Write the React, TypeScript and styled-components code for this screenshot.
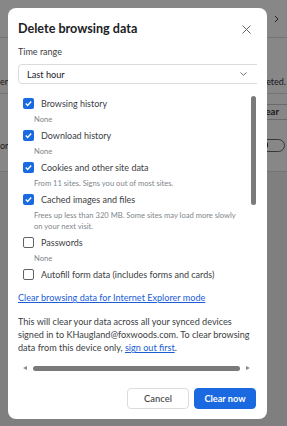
import React from "react";
import styled, { createGlobalStyle } from "styled-components";

const GlobalStyle = createGlobalStyle`
  html, body { margin: 0; padding: 0; }
  body {
    font-family: Lato, "Noto Sans", sans-serif;
    background: #f0f0f0;
    -webkit-font-smoothing: antialiased;
  }
`;

const Page = styled.div`
  position: relative;
  width: 287px;
  height: 426px;
  overflow: hidden;
  background: #f0f0f0;
`;

/* settings page behind the dialog */
const Card = styled.div`
  display: flex;
  flex-direction: column;
  background: #fff;
  color: #333;
  font-size: 9px;
`;

const CardRow = styled.div<{ $h: number }>`
  height: ${(p) => p.$h}px;
  border-bottom: 1px solid #dcdcdc;
  display: flex;
  flex-direction: column;
  justify-content: space-between;
`;

const Line = styled.div<{ $h: number }>`
  height: ${(p) => p.$h}px;
  display: flex;
  align-items: center;
  justify-content: space-between;
  white-space: nowrap;
  padding-right: 1px;
`;

const GhostButton = styled.div`
  height: 14px;
  padding: 0 8px 0 10px;
  border: 1px solid #c8c8c8;
  border-right: none;
  border-radius: 4px 0 0 4px;
  font-weight: 700;
  font-size: 9.5px;
  line-height: 14px;
  margin-right: -1px;
`;

const Toggle = styled.div`
  width: 22px;
  height: 11px;
  border: 1px solid #6a6a6a;
  border-radius: 7px;
  display: flex;
  align-items: center;
  padding: 0 2px;
  margin-right: 1px;
  &::before {
    content: "";
    width: 8px;
    height: 8px;
    border-radius: 50%;
    background: #222;
  }
`;

const Overlay = styled.div`
  position: absolute;
  inset: 0;
  background: rgba(0, 0, 0, 0.47);
`;

const Dialog = styled.div`
  position: absolute;
  left: 8px;
  top: 8px;
  width: 259px;
  height: 411px;
  box-sizing: border-box;
  background: #fff;
  border-radius: 8px;
  padding: 0 10px 10px;
  display: flex;
  flex-direction: column;
  color: #3c4043;
`;

const Header = styled.div`
  height: 29px;
  padding-top: 12px;
  box-sizing: border-box;
  display: flex;
  justify-content: space-between;
  align-items: flex-start;
`;

const Title = styled.h1`
  margin: 0;
  font-size: 12.6px;
  line-height: 17px;
  font-weight: 700;
  color: #202124;
`;

const CloseButton = styled.button`
  width: 16px;
  height: 16px;
  margin: 1px 3px 0 0;
  padding: 0;
  border: none;
  background: none;
  display: flex;
  align-items: center;
  justify-content: center;
  color: #5f6368;
`;

const Body = styled.div`
  display: flex;
  flex-direction: column;
  overflow: hidden;
`;

const FieldLabel = styled.div`
  margin-top: 9px;
  font-size: 9px;
  line-height: 12px;
  color: #3c4043;
`;

const SelectBox = styled.div`
  margin-top: 6px;
  width: 244px;
  height: 20px;
  flex-shrink: 0;
  box-sizing: border-box;
  border: 1px solid #dadce0;
  border-radius: 4px;
  padding: 0 14px 0 8px;
  display: flex;
  align-items: center;
  justify-content: space-between;
  font-size: 9.2px;
  color: #202124;
`;

const ScrollArea = styled.div`
  margin-top: 8px;
  height: 282px;
  flex-shrink: 0;
  display: grid;
  grid-template-columns: 1fr 6px;
  grid-template-rows: 270px 12px;
`;

const ScrollContent = styled.div`
  overflow: hidden;
  padding-top: 3px;
  white-space: nowrap;
`;

const VTrack = styled.div`
  display: flex;
  flex-direction: column;
  padding-top: 4px;
`;

const VThumb = styled.div`
  width: 5px;
  height: 109px;
  border-radius: 3px;
  background: #7a7a7a;
`;

const HTrack = styled.div`
  display: flex;
  align-items: center;
  gap: 6px;
  padding: 0 1px 0 5px;
`;

const HThumb = styled.div`
  flex: 1;
  height: 5px;
  border-radius: 3px;
  background: #7a7a7a;
`;

const Arrow = styled.div<{ $dir: "left" | "right" }>`
  width: 0;
  height: 0;
  border-top: 2.5px solid transparent;
  border-bottom: 2.5px solid transparent;
  ${(p) =>
    p.$dir === "left"
      ? "border-right: 4px solid #8a8a8a;"
      : "border-left: 4px solid #8a8a8a;"}
`;

const Item = styled.div``;

const ItemRow = styled.label`
  height: 16px;
  display: flex;
  align-items: center;
  gap: 7px;
  padding-left: 5px;
  font-size: 9px;
  color: #3c4043;
`;

const Box = styled.span<{ $checked: boolean }>`
  width: 11px;
  height: 11px;
  box-sizing: border-box;
  border-radius: 2px;
  flex-shrink: 0;
  display: flex;
  align-items: center;
  justify-content: center;
  background: ${(p) => (p.$checked ? "#1a69e0" : "#fff")};
  border: ${(p) => (p.$checked ? "none" : "1.5px solid #5f6368")};
`;

const Sub = styled.div`
  padding: 3px 0 2px 16px;
  font-size: 7.6px;
  line-height: 11px;
  color: #80868b;
`;

const IeLink = styled.a`
  display: block;
  margin-top: 10px;
  font-size: 9.1px;
  line-height: 12px;
  color: #1a5dd6;
  text-decoration: underline;
`;

const Note = styled.p`
  margin: 11px 0 0;
  font-size: 9.1px;
  line-height: 13px;
  color: #3c4043;
`;

const InlineLink = styled.a`
  color: #1a5dd6;
  text-decoration: underline;
`;

const Footer = styled.div`
  margin-top: 14px;
  display: flex;
  justify-content: flex-end;
  gap: 5px;
  padding-right: 1px;
`;

const Button = styled.button<{ $primary?: boolean }>`
  width: 62px;
  height: 21px;
  box-sizing: border-box;
  border-radius: 4px;
  font-family: inherit;
  font-size: ${(p) => (p.$primary ? "9.2px" : "9.4px")};
  font-weight: ${(p) => (p.$primary ? 700 : 500)};
  border: 1px solid ${(p) => (p.$primary ? "#1a69e0" : "#dadce0")};
  background: ${(p) => (p.$primary ? "#1a69e0" : "#fff")};
  color: ${(p) => (p.$primary ? "#fff" : "#3c4043")};
  padding: 0;
`;

const Check = () => (
  <svg width="9" height="9" viewBox="0 0 9 9">
    <path d="M1.8 4.6 L3.6 6.4 L7.2 2.6" fill="none" stroke="#fff" strokeWidth="1.4" />
  </svg>
);

const items = [
  { label: "Browsing history", checked: true, sub: ["None"] },
  { label: "Download history", checked: true, sub: ["None"] },
  { label: "Cookies and other site data", checked: true, sub: ["From 11 sites. Signs you out of most sites."] },
  {
    label: "Cached images and files",
    checked: true,
    sub: ["Frees up less than 320 MB. Some sites may load more slowly", "on your next visit."],
  },
  { label: "Passwords", checked: false, sub: ["None"] },
  { label: "Autofill form data (includes forms and cards)", checked: false, sub: [] },
];

export default function App() {
  return (
    <>
      <GlobalStyle />
      <Page>
        <Card>
          <CardRow $h={37}>
            <Line $h={37} style={{ justifyContent: "flex-end", paddingRight: 8 }}>
              <svg width="5" height="8" viewBox="0 0 5 8">
                <path d="M1 1 L4 4 L1 7" fill="none" stroke="#444" strokeWidth="1" />
              </svg>
            </Line>
          </CardRow>
          <CardRow $h={55}>
            <Line $h={30} />
            <Line $h={24}>
              <span>er</span>
              <span>are deleted.</span>
            </Line>
          </CardRow>
          <CardRow $h={77}>
            <Line $h={36}>
              <span />
              <GhostButton>Clear</GhostButton>
            </Line>
            <Line $h={32} style={{ marginBottom: 10 }}>
              <span>or</span>
              <Toggle />
            </Line>
          </CardRow>
        </Card>
        <Overlay />
        <Dialog>
          <Header>
            <Title>Delete browsing data</Title>
            <CloseButton aria-label="Close">
              <svg width="9" height="9" viewBox="0 0 9 9">
                <path d="M0.5 0.5 L8.5 8.5 M8.5 0.5 L0.5 8.5" stroke="#5f6368" strokeWidth="1" />
              </svg>
            </CloseButton>
          </Header>
          <Body>
            <FieldLabel>Time range</FieldLabel>
            <SelectBox>
              <span>Last hour</span>
              <svg width="7" height="4" viewBox="0 0 7 4">
                <path d="M0.5 0.5 L3.5 3.3 L6.5 0.5" fill="none" stroke="#5f6368" strokeWidth="0.9" />
              </svg>
            </SelectBox>
            <ScrollArea>
              <ScrollContent>
                {items.map((it) => (
                  <Item key={it.label}>
                    <ItemRow>
                      <Box $checked={it.checked}>{it.checked && <Check />}</Box>
                      {it.label}
                    </ItemRow>
                    {it.sub.length > 0 && (
                      <Sub>
                        {it.sub.map((s, i) => (
                          <div key={i}>{s}</div>
                        ))}
                      </Sub>
                    )}
                  </Item>
                ))}
                <IeLink href="#">Clear browsing data for Internet Explorer mode</IeLink>
                <Note>
                  This will clear your data across all your synced devices
                  <br />
                  signed in to KHaugland@foxwoods.com. To clear browsing
                  <br />
                  data from this device only, <InlineLink href="#">sign out first</InlineLink>.
                </Note>
              </ScrollContent>
              <VTrack>
                <VThumb />
              </VTrack>
              <HTrack>
                <Arrow $dir="left" />
                <HThumb />
                <Arrow $dir="right" />
              </HTrack>
            </ScrollArea>
          </Body>
          <Footer>
            <Button>Cancel</Button>
            <Button $primary>Clear now</Button>
          </Footer>
        </Dialog>
      </Page>
    </>
  );
}
